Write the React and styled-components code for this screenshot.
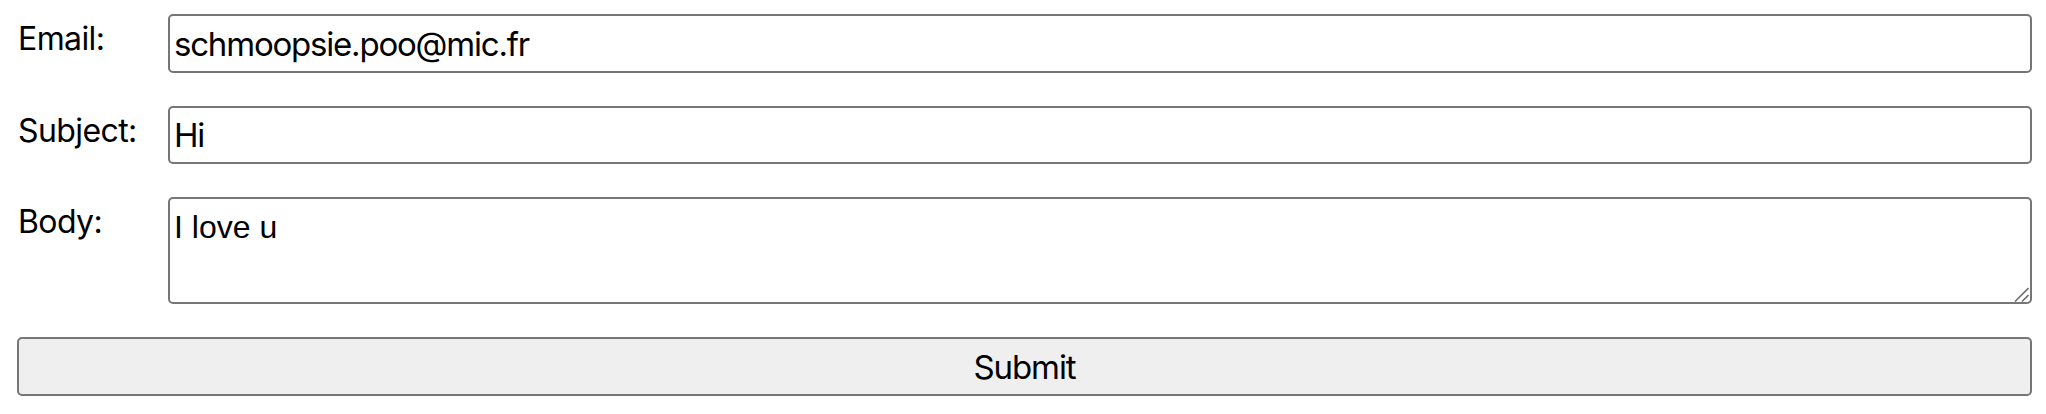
import React from 'react';
import styled, { createGlobalStyle } from 'styled-components';

const GlobalStyle = createGlobalStyle`
  body {
    margin: 0;
    background: #ffffff;
    font-family: Inter, "Open Sans", sans-serif;
    color: #000;
  }
`;

const Form = styled.form`
  display: grid;
  grid-template-columns: 151px 1fr;
  row-gap: 33px;
  padding: 14px 14px 0 17px;
`;

const Label = styled.label`
  font-size: 32px;
  letter-spacing: -0.6px;
  padding-top: 5px;
  padding-left: 1px;
`;

const fieldBase = `
  box-sizing: border-box;
  width: 100%;
  margin: 0;
  border: 2px solid #767676;
  border-radius: 5px;
  background: #fff;
  color: #000;
  outline: none;
`;

const TextInput = styled.input`
  ${fieldBase}
  height: ${(p) => p.$h}px;
  padding: 0 4px;
  font-family: Inter, "Open Sans", sans-serif;
  font-size: 33px;
  letter-spacing: -1.2px;
`;

const AreaWrap = styled.div`
  position: relative;
  height: 107px;
`;

const TextArea = styled.textarea`
  ${fieldBase}
  display: block;
  height: 107px;
  padding: 10px 4px 4px;
  font-family: "Liberation Sans", Arial, sans-serif;
  font-size: 32px;
  resize: none;
`;

const Grip = styled.svg`
  position: absolute;
  right: 3px;
  bottom: 2px;
  pointer-events: none;
`;

const SubmitButton = styled.button`
  grid-column: 1 / -1;
  box-sizing: border-box;
  height: 59px;
  border: 2px solid #767676;
  border-radius: 5px;
  background: #efefef;
  color: #000;
  font-family: Inter, "Open Sans", sans-serif;
  font-size: 33px;
  letter-spacing: -1.1px;
`;

const App = () => {
  return (
    <>
      <GlobalStyle />
      <Form onSubmit={(e) => e.preventDefault()}>
        <Label htmlFor="email">Email:</Label>
        <TextInput id="email" type="email" $h={59} defaultValue="schmoopsie.poo@mic.fr" />
        <Label htmlFor="subject">Subject:</Label>
        <TextInput id="subject" type="text" $h={58} defaultValue="Hi" />
        <Label htmlFor="body">Body:</Label>
        <AreaWrap>
          <TextArea id="body" defaultValue="I love u" />
          <Grip width="16" height="16" viewBox="0 0 16 16">
            <path d="M2 15.5 L15.5 2 M9 15.5 L15.5 9" stroke="#6f6f6f" strokeWidth="1.6" fill="none" />
          </Grip>
        </AreaWrap>
        <SubmitButton type="submit">Submit</SubmitButton>
      </Form>
    </>
  );
};

export default App;
